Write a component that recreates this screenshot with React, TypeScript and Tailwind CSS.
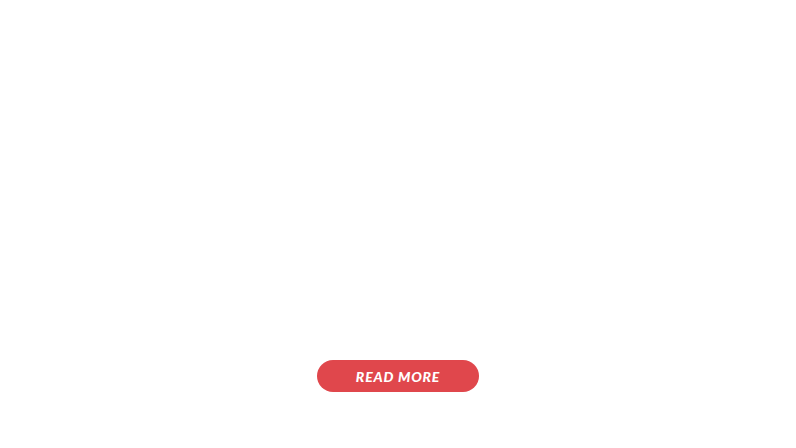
export default function App() {
	return (
		<div className="w-[796px] h-[448px] bg-white flex flex-col items-center">
			<div className="h-[360px]" />
			<button
				className="w-[162px] h-[32px] rounded-full bg-[#e0474c] text-white uppercase italic font-black text-[14px] tracking-[0.8px] flex items-center justify-center"
				style={{ fontFamily: 'Lato, "Liberation Sans", sans-serif' }}
			>
				Read More
			</button>
		</div>
	);
}
